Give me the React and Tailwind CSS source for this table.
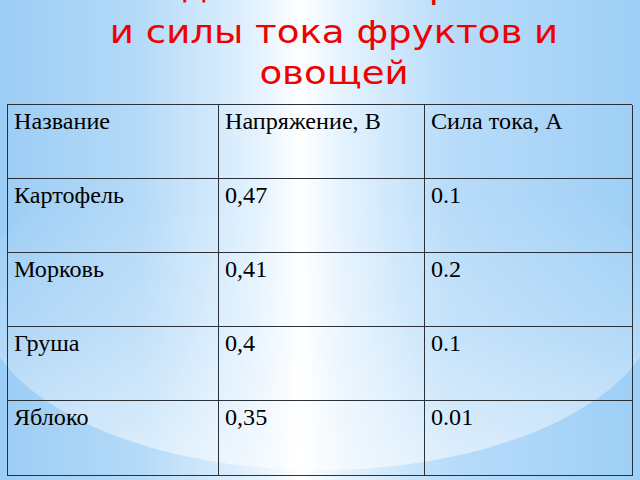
const rows = [
  ['Название', 'Напряжение, В', 'Сила тока, А'],
  ['Картофель', '0,47', '0.1'],
  ['Морковь', '0,41', '0.2'],
  ['Груша', '0,4', '0.1'],
  ['Яблоко', '0,35', '0.01'],
]

export default function App() {
  return (
    <div className="relative w-[640px] h-[480px] overflow-hidden bg-[linear-gradient(to_right,#9ccdf5_0%,#b4daf8_22%,#e3f2fe_40%,#ffffff_47%,#e3f2fe_54%,#b8dcf9_70%,#9ecff6_100%)]">
      {/* background swoosh */}
      <div className="absolute left-[-20px] top-[130px] w-[680px] h-[340px] rounded-[50%] bg-[linear-gradient(to_bottom,rgba(255,255,255,0)_20%,rgba(255,255,255,0.2)_60%,rgba(255,255,255,0.55))]" />

      <div className="relative">
        <h1 className="mt-[-33px] pl-[28px] text-center text-[32px] leading-[41px] text-[#f00000] [font-family:DejaVu_Sans,sans-serif] font-normal">
          <div className="scale-x-[1.16] mb-[4px]">Исследование напряжения</div>
          <div className="scale-x-[1.16]">и силы тока фруктов и</div>
          <div className="scale-x-[1.16]">овощей</div>
        </h1>

        <div className="mt-[10px] ml-[7px] w-[625px] grid grid-cols-[211px_206px_208px] border-l-[1.5px] border-t-[1.5px] border-[#2b3138] [font-family:Liberation_Serif,Times_New_Roman,serif] text-[23px] leading-[25px] text-black">
          {rows.map((r, i) =>
            r.map((c, j) => (
              <div
                key={i + '-' + j}
                className={`border-r-[1.5px] border-b-[1.5px] border-[#2b3138] pl-[6px] pt-[4px] ${i === 4 ? 'h-[75px]' : 'h-[74px]'}`}
              >
                <span className="inline-block origin-left scale-x-[1.05] whitespace-nowrap">{c}</span>
              </div>
            ))
          )}
        </div>
      </div>
    </div>
  )
}
